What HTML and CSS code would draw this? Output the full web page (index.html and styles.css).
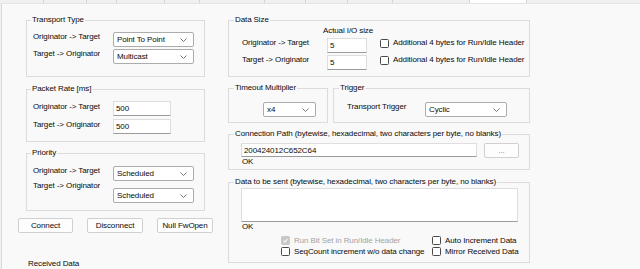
FILE: index.html
```html
<!DOCTYPE html>
<html lang="en">
<head>
    <meta charset="UTF-8">
    <title>Forward Open</title>
    <link rel="stylesheet" href="styles.css">
</head>
<body>
    <div class="tabs">
        <div class="tab" style="width:43px"></div>
        <div class="tab" style="width:43px"></div>
        <div class="tab" style="width:30px"></div>
        <div class="tab" style="width:48px"></div>
        <div class="tab" style="width:35px"></div>
        <div class="tab" style="width:65px"></div>
        <div class="tab" style="width:41px"></div>
        <div class="tab" style="width:42px"></div>
        <div class="tab" style="width:45px"></div>
        <div class="tab" style="width:77px"></div>
        <div class="tab active" style="width:57px"></div>
        <div class="tab rest"></div>
    </div>

    <div class="page">
        <div class="col left">
            <fieldset class="grp transport">
                <legend>Transport Type</legend>
                <div class="row">
                    <span class="lbl">Originator -&gt; Target</span>
                    <div class="combo"><span>Point To Point</span><svg class="chev" viewBox="0 0 7 4"><polyline points="0.5,0.5 3.5,3.5 6.5,0.5"/></svg></div>
                </div>
                <div class="row">
                    <span class="lbl">Target -&gt; Originator</span>
                    <div class="combo"><span>Multicast</span><svg class="chev" viewBox="0 0 7 4"><polyline points="0.5,0.5 3.5,3.5 6.5,0.5"/></svg></div>
                </div>
            </fieldset>

            <fieldset class="grp rate">
                <legend>Packet Rate [ms]</legend>
                <div class="row">
                    <span class="lbl">Originator -&gt; Target</span>
                    <input class="txt" type="text" value="500">
                </div>
                <div class="row">
                    <span class="lbl">Target -&gt; Originator</span>
                    <input class="txt" type="text" value="500">
                </div>
            </fieldset>

            <fieldset class="grp priority">
                <legend>Priority</legend>
                <div class="row">
                    <span class="lbl">Originator -&gt; Target</span>
                    <div class="combo"><span>Scheduled</span><svg class="chev" viewBox="0 0 7 4"><polyline points="0.5,0.5 3.5,3.5 6.5,0.5"/></svg></div>
                </div>
                <div class="row low">
                    <span class="lbl">Target -&gt; Originator</span>
                    <div class="combo"><span>Scheduled</span><svg class="chev" viewBox="0 0 7 4"><polyline points="0.5,0.5 3.5,3.5 6.5,0.5"/></svg></div>
                </div>
            </fieldset>

            <div class="buttons">
                <button class="btn">Connect</button>
                <button class="btn wide">Disconnect</button>
                <button class="btn wide">Null FwOpen</button>
            </div>

            <div class="received">Received Data</div>
        </div>

        <div class="col right">
            <fieldset class="grp size">
                <legend>Data Size</legend>
                <div class="io-head">Actual I/O size</div>
                <div class="row">
                    <span class="lbl">Originator -&gt; Target</span>
                    <input class="txt io" type="text" value="5">
                    <span class="cb"></span>
                    <span class="cb-text">Additional 4 bytes for Run/Idle Header</span>
                </div>
                <div class="row">
                    <span class="lbl">Target -&gt; Originator</span>
                    <input class="txt io" type="text" value="5">
                    <span class="cb"></span>
                    <span class="cb-text">Additional 4 bytes for Run/Idle Header</span>
                </div>
            </fieldset>

            <div class="pair">
                <fieldset class="grp timeout">
                    <legend>Timeout Multiplier</legend>
                    <div class="combo small"><span>x4</span><svg class="chev" viewBox="0 0 7 4"><polyline points="0.5,0.5 3.5,3.5 6.5,0.5"/></svg></div>
                </fieldset>
                <fieldset class="grp trigger">
                    <legend>Trigger</legend>
                    <div class="row">
                        <span class="lbl">Transport Trigger</span>
                        <div class="combo"><span>Cyclic</span><svg class="chev" viewBox="0 0 7 4"><polyline points="0.5,0.5 3.5,3.5 6.5,0.5"/></svg></div>
                    </div>
                </fieldset>
            </div>

            <fieldset class="grp path">
                <legend>Connection Path (bytewise, hexadecimal, two characters per byte, no blanks)</legend>
                <div class="path-row">
                    <div class="path-field">
                        <input class="txt" type="text" value="200424012C652C64">
                        <div class="status">OK</div>
                    </div>
                    <button class="btn dots">...</button>
                </div>
            </fieldset>

            <fieldset class="grp send">
                <legend>Data to be sent (bytewise, hexadecimal, two characters per byte, no blanks)</legend>
                <textarea class="area"></textarea>
                <div class="status">OK</div>
                <div class="checks">
                    <label class="check off"><span class="cb on"><svg viewBox="0 0 9 9"><polyline points="2,4.6 3.8,6.4 7,2.6"/></svg></span>Run Bit Set in Run/Idle Header</label>
                    <label class="check"><span class="cb"></span>Auto Increment Data</label>
                    <label class="check"><span class="cb"></span>SeqCount increment w/o data change</label>
                    <label class="check"><span class="cb"></span>Mirror Received Data</label>
                </div>
            </fieldset>
        </div>
    </div>
</body>
</html>
```

FILE: styles.css
```css
* {
    box-sizing: border-box;
}

body {
    margin: 0;
    background-color: #f0f0f0;
    font-family: "Liberation Sans", Arial, sans-serif;
    font-size: 8px;
    letter-spacing: -0.1px;
    color: #0a0a0a;
    overflow: hidden;
}

.tabs {
    display: flex;
    height: 3px;
    margin-left: 1px;
}

.tab {
    border-right: 1px solid #d4d4d4;
    background-color: #f0f0f0;
}

.tab.active {
    background-color: #ffffff;
}

.tab.rest {
    flex: 1;
    border-right: none;
}

.page {
    display: flex;
    gap: 15px;
    height: 266px;
    margin-left: 1px;
    padding: 10px 0 0 16px;
    background-color: #f9f9f9;
    border-left: 1px solid #dadada;
    border-top: 1px solid #e3e3e3;
}

.col {
    display: flex;
    flex-direction: column;
    flex: none;
}

.left {
    width: 195px;
}

.right {
    width: 302px;
}

/* group boxes */
.grp {
    margin: 0;
    min-width: 0;
    border: 1px solid #dcdcdc;
    padding: 0 4px;
}

.grp legend {
    padding: 0 1px;
    line-height: 12px;
}

.left .grp {
    margin: 0 8px;
}

.right .grp {
    padding: 0 5px;
}

.row {
    display: flex;
    align-items: flex-start;
    height: 15px;
}

.row > * {
    flex: none;
}

.lbl {
    line-height: 10px;
    padding-left: 2px;
    white-space: nowrap;
}

.left .lbl {
    width: 82px;
}

/* controls */
.combo {
    display: flex;
    align-items: center;
    justify-content: space-between;
    width: 81px;
    height: 15px;
    padding: 0 6px 0 3px;
    background-color: #ffffff;
    border: 1px solid #acacac;
    border-radius: 2px;
}

.chev {
    width: 7px;
    height: 4px;
    fill: none;
    stroke: #6a6a6a;
    stroke-width: 0.9;
}

.txt {
    width: 58px;
    height: 15px;
    margin: 0;
    padding: 0 2px;
    font-family: inherit;
    font-size: 8px;
    letter-spacing: inherit;
    color: #0a0a0a;
    background-color: #ffffff;
    border: 1px solid #dedede;
    border-bottom-color: #9c9c9c;
    outline: none;
}

.btn {
    height: 15px;
    padding: 0;
    font-family: inherit;
    font-size: 8px;
    letter-spacing: inherit;
    color: #0a0a0a;
    background-color: #fdfdfd;
    border: 1px solid #d0d0d0;
    border-radius: 2px;
}

.cb {
    display: inline-block;
    width: 9px;
    height: 9px;
    flex: none;
    background-color: #ffffff;
    border: 1px solid #4a4a4a;
    border-radius: 1.5px;
}

.cb svg {
    display: block;
    width: 7px;
    height: 7px;
    fill: none;
    stroke: #ffffff;
    stroke-width: 1.3;
}

.cb.on {
    background-color: #c8c8c8;
    border-color: #c8c8c8;
}

/* left column groups */
.transport {
    padding-top: 6px;
    padding-bottom: 12px;
}

.transport .row + .row {
    margin-top: 2px;
}

.rate {
    margin-top: 6px !important;
    padding-top: 6px;
    padding-bottom: 7px;
}

.rate .row + .row {
    margin-top: 3px;
}

.rate .lbl {
    margin-top: 1px;
}

.priority {
    margin-top: 5px !important;
    padding-top: 7px;
    padding-bottom: 7px;
}

.priority .row.low {
    height: 22px;
}

.priority .row.low .combo {
    margin-top: 7px;
}

.buttons {
    display: flex;
    gap: 14px;
    margin-top: 7px;
}

.buttons .btn {
    width: 55px;
}

.buttons .btn.wide {
    width: 56px;
}

.received {
    margin-top: 25px;
    padding-left: 10px;
    line-height: 12px;
}

/* right column groups */
.size {
    padding-bottom: 6px !important;
}

.io-head {
    margin-left: 89px;
    line-height: 10px;
}

.size .row {
    margin-top: 2px;
}

.size .lbl {
    width: 93px;
    padding-left: 8px;
}

.txt.io {
    width: 40px;
}

.size .cb {
    margin: 1px 4px 0 13px;
}

.cb-text {
    line-height: 10px;
    white-space: nowrap;
}

.pair {
    display: flex;
    gap: 5px;
    margin-top: 5px;
}

.timeout,
.trigger {
    padding-top: 8px !important;
    padding-bottom: 5px !important;
}

.timeout {
    width: 100px;
}

.trigger {
    flex: 1;
}

.combo.small {
    width: 53px;
    margin-left: 29px;
}

.trigger .lbl {
    width: 86px;
    padding-left: 8px;
    margin-top: 0;
}

.trigger .combo {
    width: 82px;
}

.path {
    margin-top: 5px !important;
    padding-top: 3px !important;
    padding-bottom: 3px !important;
}

.path-row {
    display: flex;
    align-items: flex-start;
}

.path-field {
    margin-left: 7px;
}

.path-field .txt {
    display: block;
    width: 236px;
    height: 14px;
}

.status {
    line-height: 9px;
    padding-left: 1px;
}

.btn.dots {
    width: 35px;
    margin-left: 7px;
    color: #8a8a8a;
}

.send {
    margin-top: 6px !important;
    padding-bottom: 5px !important;
}

.area {
    display: block;
    width: 277px;
    height: 34px;
    margin: 0 0 0 7px;
    resize: none;
    background-color: #ffffff;
    border: 1px solid #dedede;
    border-bottom-color: #9c9c9c;
    outline: none;
}

.send .status {
    line-height: 10px;
    margin-left: 7px;
}

.checks {
    display: grid;
    grid-template-columns: 151px auto;
    margin: 3px 0 0 47px;
}

.check {
    display: flex;
    align-items: center;
    gap: 4px;
    height: 11px;
    white-space: nowrap;
}

.check.off {
    color: #a3a3a3;
}
```
